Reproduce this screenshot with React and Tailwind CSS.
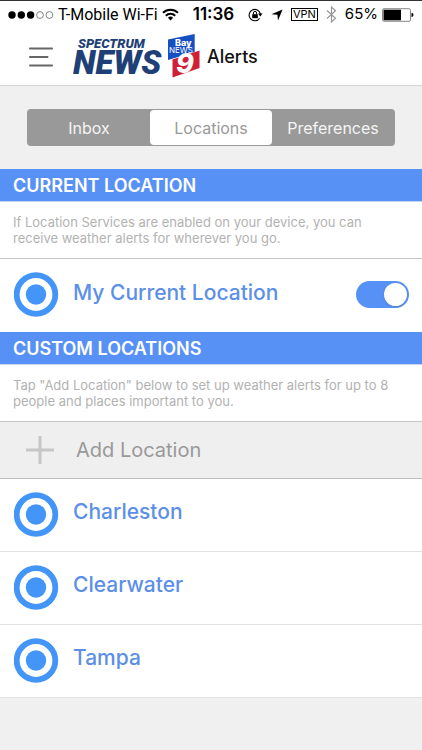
import React from "react";

const places = ["Charleston", "Clearwater", "Tampa"];
const sans = "font-['Inter','Liberation_Sans',sans-serif]";

function StatusBar() {
  return (
    <div className="flex h-7 items-center border-t border-[#333] px-2 text-[15px] text-black">
      <svg className="mr-1 shrink-0" width="46" height="8" viewBox="0 0 46 8" aria-hidden="true">
        <circle cx="4" cy="4" r="3.7" />
        <circle cx="13.3" cy="4" r="3.7" />
        <circle cx="22.6" cy="4" r="3.7" />
        <circle cx="32" cy="4" r="3.4" fill="none" stroke="#555" strokeWidth="0.7" />
        <circle cx="41.4" cy="4" r="3.4" fill="none" stroke="#555" strokeWidth="0.7" />
      </svg>
      <span className="whitespace-nowrap font-['Roboto','Liberation_Sans',sans-serif] text-base">T-Mobile Wi-Fi</span>
      <svg className="ml-1 shrink-0" width="17" height="13" viewBox="0 0 17 13" fill="none" stroke="#000" strokeWidth="2" aria-hidden="true">
        <path d="M1 4.8a10.600 10.600 0 0 1 15 0" />
        <path d="M3.800 7.800a6.700 6.700 0 0 1 9.400 0" />
        <path d="M8.500 12.400 5.900 9.800a3.700 3.700 0 0 1 5.200 0z" fill="#000" stroke="none" />
      </svg>
      <span className="ml-3.5 text-[17px] font-semibold">11:36</span>
      <div className="ml-auto flex items-center">
        <svg className="mr-2 shrink-0" width="15" height="14" viewBox="0 0 15 14" fill="none" stroke="#000" aria-hidden="true">
          <path d="M11.600 10.200A5.700 5.700 0 1 1 12.400 6" strokeWidth="1.1" />
          <path d="M10 5.600h4.600l-2.300 3z" fill="#000" stroke="none" />
          <rect x="4.200" y="6.200" width="5.600" height="4" fill="#000" stroke="none" />
          <path d="M5.400 6.200V5a1.600 1.600 0 0 1 3.200 0v1.200" strokeWidth="1" />
        </svg>
        <svg className="mr-2 shrink-0" width="12" height="12" viewBox="0 0 12 12" aria-hidden="true">
          <path d="M11.600.4 7 11.600 6.400 5.800.4 5.200z" />
        </svg>
        <span className="mr-2 border border-black px-px text-[11px] leading-[11px]">VPN</span>
        <svg className="mr-2 shrink-0" width="11" height="17" viewBox="0 0 11 17" fill="none" stroke="#999" strokeWidth="1.200" aria-hidden="true">
          <path d="M1 4.500 9.500 12.200 5.500 16V1l4 3.800L1 12.500" />
        </svg>
        <span>65%</span>
        <svg className="ml-1 shrink-0" width="32" height="14" viewBox="0 0 32 14" aria-hidden="true">
          <rect x="0.5" y="0.7" width="28" height="12.600" rx="1.500" fill="#fff" stroke="#888" />
          <path d="M1.500 1.700H19v10.600H1.500z" />
          <path d="M29.500 4.800c2.600.6 2.600 3.800 0 4.400z" />
        </svg>
      </div>
    </div>
  );
}

function Logo() {
  return (
    <svg className="shrink-0" width="128" height="52" viewBox="0 -3 128 52" role="img" aria-label="Spectrum News Bay News 9">
      <g className="font-['Roboto','Liberation_Sans',sans-serif] font-black italic" fill="#1f3f77">
        <text x="5" y="14" fontSize="13">SPECTRUM</text>
        <text x="0" y="40" fontSize="33">NEWS</text>
      </g>
      <path d="M95 5.500 121.700 0v18L95 26z" fill="#164fc0" />
      <path d="M99.500 25.500 126.500 16.500V34l-27 9.500z" fill="#cf2038" />
      <g className="font-['Inter','Liberation_Sans',sans-serif]" fill="#fff">
        <text x="102" y="12" fontSize="9" className="font-extrabold">Bay</text>
        <text x="96" y="19" fontSize="8">NEWS</text>
        <text x="103" y="39" fontSize="27" className="font-extrabold italic">9</text>
      </g>
    </svg>
  );
}

function Target() {
  return (
    <svg className="shrink-0" width="45" height="45" viewBox="0 0 45 45" aria-hidden="true">
      <circle cx="22" cy="22.500" r="19.300" fill="#fff" stroke="#4396f8" strokeWidth="5.800" />
      <circle cx="22" cy="22.500" r="10.200" fill="#4396f8" />
    </svg>
  );
}

function SectionTitle({ children }) {
  return (
    <h2 className="h-[33px] border-b border-[#c5d3ee] bg-[#5891f6] px-[13px] text-lg leading-[33px] font-semibold text-white">
      {children}
    </h2>
  );
}

function Hint({ children }) {
  return <p className="border-b border-[#c4c4c4] bg-white px-[13px] py-3 text-[13px] leading-4 text-[#b2b2b2]">{children}</p>;
}

export default function App() {
  return (
    <div className={`min-h-screen bg-[#f0f0f0] ${sans}`}>
      <header className="border-b border-[#d4d4d4] bg-white">
        <StatusBar />
        <div className="flex h-[57px] items-center pl-[29px]">
          <button type="button" aria-label="Menu" className="mr-5">
            <svg width="24" height="20" viewBox="0 0 24 20" stroke="#666" strokeWidth="2" strokeLinecap="round" aria-hidden="true">
              <path d="M1 1.500h22M1 10h17.500M1 18.500h22" />
            </svg>
          </button>
          <Logo />
          <h1 className="ml-1.5 text-lg font-medium text-[#111]">Alerts</h1>
        </div>
      </header>

      <nav className="px-[27px] py-[23px]">
        <div className="grid h-[37px] grid-cols-3 rounded bg-[#999] p-px text-base text-[#f4f4f4]">
          <button type="button">Inbox</button>
          <button type="button" aria-current="page" className="rounded bg-white text-[#999]">Locations</button>
          <button type="button">Preferences</button>
        </div>
      </nav>

      <main>
        <section>
          <SectionTitle>CURRENT LOCATION</SectionTitle>
          <Hint>If Location Services are enabled on your device, you can receive weather alerts for wherever you go.</Hint>
          <div className="flex h-[73px] items-center bg-white pr-[13px] pb-0.5 pl-3.5">
            <Target />
            <label htmlFor="current" className="ml-3.5 pb-1 text-[21px] font-medium text-[#5c8fe8]">My Current Location</label>
            <input
              id="current"
              type="checkbox"
              role="switch"
              defaultChecked
              className="ml-auto h-[27px] w-[53px] appearance-none rounded-full bg-[#c8c8c8] p-0.5 before:block before:size-[23px] before:rounded-full before:bg-white before:shadow checked:bg-[#5891f6] checked:before:ml-auto"
            />
          </div>
        </section>

        <section>
          <SectionTitle>CUSTOM LOCATIONS</SectionTitle>
          <Hint>Tap "Add Location" below to set up weather alerts for up to 8 people and places important to you.</Hint>
          <button type="button" className="flex h-[57px] w-full items-center border-b border-[#bdbdbd] bg-[#efefef] pl-[26px] text-xl text-[#999]">
            <svg className="mr-[22px]" width="28" height="28" viewBox="0 0 28 28" stroke="#c6c6c6" strokeWidth="3" aria-hidden="true">
              <path d="M14 0v28M0 14h28" />
            </svg>
            Add Location
          </button>
          <ul>
            {places.map((name) => (
              <li key={name} className="flex h-[73px] items-center border-b border-[#e2e2e2] bg-white px-3.5 pb-0.5">
                <Target />
                <a href="#place" className="ml-3.5 pb-1 text-[21px] font-medium text-[#5c8fe8]">{name}</a>
              </li>
            ))}
          </ul>
        </section>
      </main>
    </div>
  );
}
